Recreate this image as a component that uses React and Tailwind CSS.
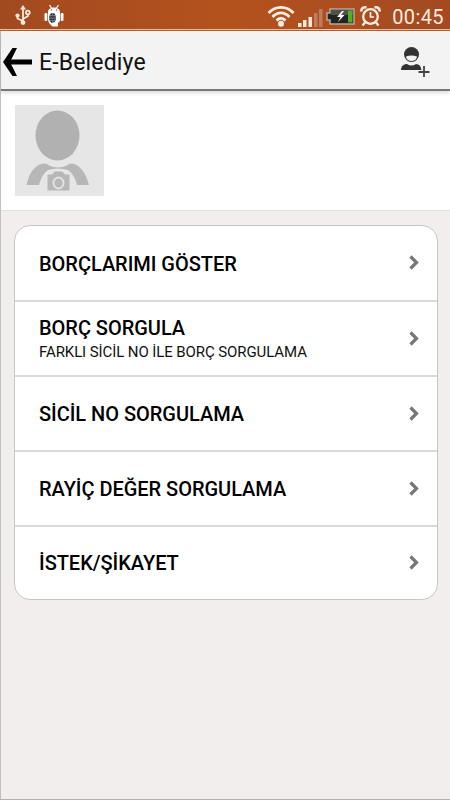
import clsx from 'clsx';

const menuItems = [
    { title: 'BORÇLARIMI GÖSTER' },
    { title: 'BORÇ SORGULA', subtitle: 'FARKLI SİCİL NO İLE BORÇ SORGULAMA' },
    { title: 'SİCİL NO SORGULAMA' },
    { title: 'RAYİÇ DEĞER SORGULAMA' },
    { title: 'İSTEK/ŞİKAYET' },
];

function UsbIcon() {
    return (
        <svg width="16" height="20" viewBox="0 0 16 20" fill="none" stroke="#fbe9dc" strokeWidth="1.8">
            <path d="M8 3v15M8 16 2.5 13.500V11M8 14l5-3V9" />
            <path d="M8 0 5 4.500h6z" fill="#fbe9dc" stroke="none" />
            <circle cx="2.500" cy="10.500" r="2.100" fill="#fbe9dc" stroke="none" />
            <circle cx="8" cy="17.600" r="2.400" fill="#fbe9dc" stroke="none" />
            <circle cx="12.800" cy="7.500" r="1.900" />
        </svg>
    );
}

function DebugIcon() {
    return (
        <svg width="20" height="22" viewBox="0 0 20 22">
            <path d="m5.500 0 2 3m7-3-2 3" stroke="#fff" strokeWidth="1.200" />
            <path d="M4 7C4 1 16 1 16 7V16l-2 2v3.500H8.500L5 18l-1-3z" fill="#fff" />
            <rect x="0.500" y="8" width="2.800" height="8" rx="1.200" fill="#fff" />
            <rect x="16.700" y="8" width="2.800" height="8" rx="1.200" fill="#fff" />
            <circle cx="7.500" cy="5" r="0.700" fill="#b9562a" />
            <circle cx="12.500" cy="5" r="0.700" fill="#b9562a" />
            <ellipse cx="8.500" cy="13" rx="3.600" ry="5" fill="#6d7880" />
            <path d="M6.500 9.500h4.500M5.500 12h6M6 14.500h5.500M7.500 8.500v9M10 8.500v8.500" stroke="#252b2e" strokeWidth="1" strokeDasharray="1.500 1" />
        </svg>
    );
}

function WifiIcon() {
    return (
        <svg width="28" height="22" viewBox="0 0 28 22" fill="none" stroke="#fdeee2" strokeWidth="2.800">
            <path d="M1.500 8c7-7.500 18-7.500 25 0M5.500 12c5-5.500 12-5.500 17 0M9.500 15.500c3-3 6-3 9 0" />
            <circle cx="14" cy="18.800" r="3" fill="#fdeee2" stroke="none" />
        </svg>
    );
}

function SignalIcon() {
    return (
        <svg width="25" height="19" viewBox="0 0 25 19">
            <path d="M0 14h3.500v4H0zM5 11h3.500v7H5zM10.500 8H14v10h-3.500z" fill="#fbeade" />
            <path d="M16 4h3.500v14H16zM21 0h3.500v18H21z" fill="#c07c5c" />
        </svg>
    );
}

function BatteryIcon() {
    return (
        <svg width="29" height="17" viewBox="0 0 29 17">
            <path d="M4 1h24v15H4v-4H1V5h3z" fill="#202522" stroke="#b9a79b" strokeWidth="1.500" />
            <path d="M5 2h22v5H5z" fill="#4c514d" />
            <path d="M22 2.500h4.500v12H22z" fill="#54ad24" />
            <path d="m16 3-5 6h3.500l-2.500 5 6.500-7H15l3-4z" fill="#fff" />
        </svg>
    );
}

function AlarmIcon() {
    return (
        <svg width="21" height="22" viewBox="0 0 21 22" fill="none" stroke="#fdeee2">
            <circle cx="10.500" cy="11.500" r="7.300" strokeWidth="2.300" />
            <path d="M1.500 6.500C1 3.500 3.500 1.500 6.500 2.500M19.500 6.500c.5-3-2-5-5-4" strokeWidth="2.600" />
            <path d="M10.500 7v5H14" strokeWidth="1.700" />
            <path d="m5 17.500-2.500 3m13.500-3 2.500 3" strokeWidth="2.400" />
        </svg>
    );
}

function StatusBar() {
    return (
        <div className="h-[31px] shrink-0 pb-px bg-[#b5602f]">
            <div className="h-[30px] flex items-start border-b border-[#e8bd9c] bg-linear-to-r from-[#a14a20] via-[#b4521d] to-[#a34a22]">
                <div className="pl-[15px] pt-[5px]"><UsbIcon /></div>
                <div className="pl-[13px] pt-[5px]"><DebugIcon /></div>
                <div className="ml-auto pt-[5px]"><WifiIcon /></div>
                <div className="pl-[3px] pt-[9px]"><SignalIcon /></div>
                <div className="pl-[3px] pt-[8px]"><BatteryIcon /></div>
                <div className="pl-[5px] pt-[5px]"><AlarmIcon /></div>
                <span className="pl-[11px] pr-1.5 pt-[5px] text-[20px] leading-6 tracking-[0.400px] text-[#fdebde]">00:45</span>
            </div>
        </div>
    );
}

function Header() {
    return (
        <header className="relative z-10 h-[60px] shrink-0 flex items-center border-b-2 border-[#777] bg-[#f3f3f3] shadow-[0_2px_4px_rgba(0,0,0,0.15)]">
            <svg className="ml-px mt-[3px]" width="30" height="30" viewBox="0 0 30 30" fill="none" stroke="#000">
                <path d="M4 15h26" strokeWidth="5" />
                <path d="M15 1h-4.500L1 15l9.500 14H15L8 15z" fill="#000" stroke="none" />
            </svg>
            <h1 className="ml-[7px] mt-1.5 text-[23px] leading-7 tracking-[0.150px] text-[#111]">E-Belediye</h1>
            <svg className="ml-auto mr-5 mt-[3px]" width="29" height="30" viewBox="0 0 29 30">
                <circle cx="10.500" cy="7.500" r="7.500" fill="#333" />
                <path d="M5 9.500q5.500-2 11 0c-.5 6-10.500 6-11 0z" fill="#f3f3f3" />
                <path d="M0 23c0-4 3-6 6-6q4.500 3 9 0c3 0 5 2 5.500 6z" fill="#333" />
                <path d="M23 19v11M17.500 25h11" stroke="#f3f3f3" strokeWidth="4" />
                <path d="M23 19v11M17.500 25h11" stroke="#444" strokeWidth="1.800" />
            </svg>
        </header>
    );
}

function Avatar() {
    return (
        <svg width="89" height="91" viewBox="0 0 89 91">
            <path d="M0 0h89v91H0z" fill="#e6e6e6" />
            <ellipse cx="42.500" cy="30.500" rx="22" ry="25" fill="#b1b1b1" />
            <path d="M11.500 80C14 68 20 60 28 58.500q5 0 6 2 9 4 18 0 1-2 5-2c8 1.500 14 9.500 17 21.500H62c-2-8-5-12-9-15q-10-3-20 0c-4 3-7 7-9 15z" fill="#b7b7b7" />
            <path d="M32 69h5l2.500-3h8l2.500 3h5v17H32z" fill="#b7b7b7" stroke="#e6e6e6" strokeWidth="1" />
            <ellipse cx="43.500" cy="78" rx="5" ry="5.500" fill="none" stroke="#e2e2e2" strokeWidth="2" />
        </svg>
    );
}

function MenuRow({ title, subtitle, first, last }) {
    return (
        <li
            className={clsx(
                'flex items-center justify-between pl-6 pr-[17px]',
                first || last ? 'h-[74px]' : 'h-[75px]',
                !first && 'border-t-2 border-[#dadada]'
            )}
        >
            <div className={clsx((first || subtitle) && 'pt-0.5')}>
                <p className="text-[20px] leading-6 tracking-[-0.030px] font-medium text-black">{title}</p>
                {subtitle && <p className="text-[15px] leading-6 tracking-[-0.090px] text-[#111]">{subtitle}</p>}
            </div>
            <svg className="-mt-px" width="11" height="15" viewBox="0 0 11 15" fill="none" stroke="#777" strokeWidth="3.200">
                <path d="m1.500 1.500 6 6-6 6" />
            </svg>
        </li>
    );
}

export default function App() {
    return (
        <div className="w-[450px] h-[800px] flex flex-col overflow-hidden bg-[#f2eeed] border-b border-[#b5b1b1] font-['Roboto',sans-serif]">
            <StatusBar />
            <div className="flex-1 flex flex-col border-l border-[#c2bfbf]">
                <Header />
                <section className="h-[120px] shrink-0 bg-white border-b border-[#e3e0df] pl-3.5 pt-3.5">
                    <Avatar />
                </section>
                <ul className="mt-3.5 ml-[13px] mr-3 rounded-[16px] border border-[#c6c6c6] bg-white">
                    {menuItems.map((item, i) => (
                        <MenuRow
                            key={item.title}
                            title={item.title}
                            subtitle={item.subtitle}
                            first={i === 0}
                            last={i === menuItems.length - 1}
                        />
                    ))}
                </ul>
            </div>
        </div>
    );
}
